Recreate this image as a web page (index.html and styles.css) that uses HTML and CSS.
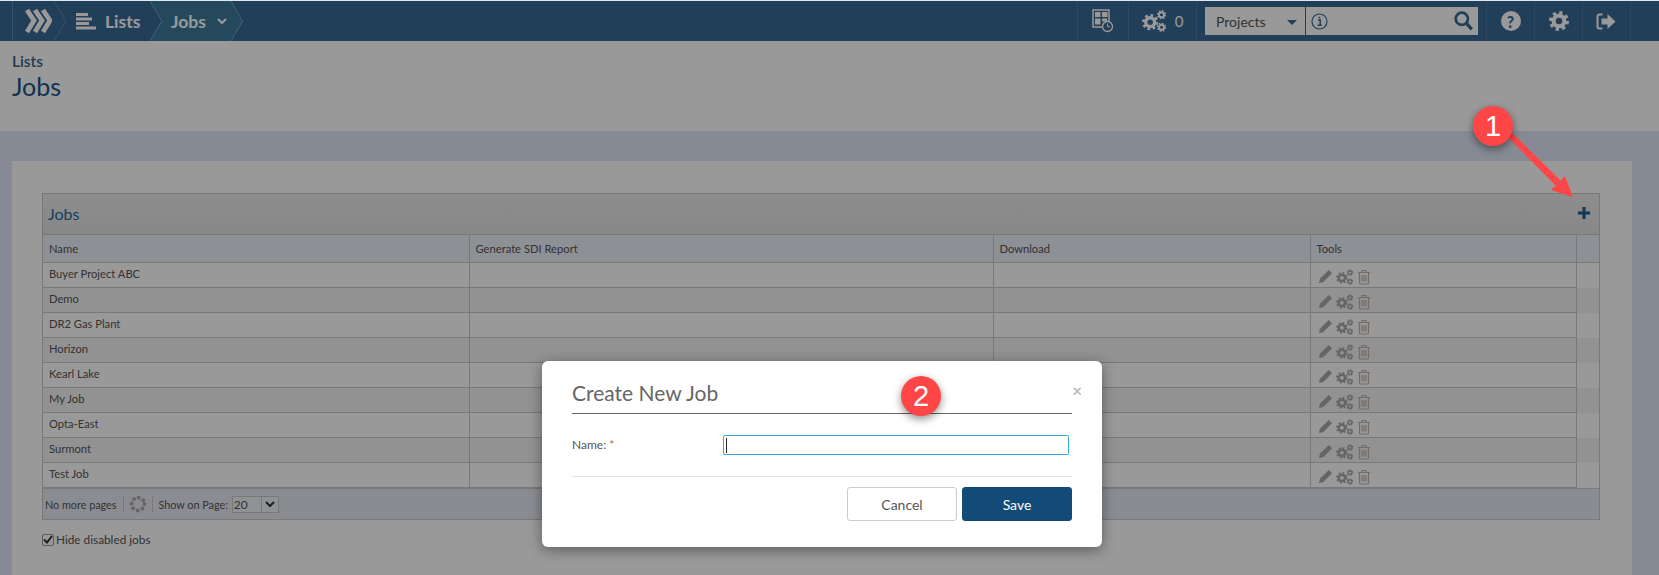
FILE: index.html
```html
<!DOCTYPE html>
<html lang="en">

<head>
    <meta charset="UTF-8">
    <meta name="viewport" content="width=device-width, initial-scale=1.0">
    <title>Jobs</title>
    <link rel="stylesheet" href="styles.css">
</head>

<body>
    <svg class="defs" width="0" height="0">
        <symbol id="gear" viewBox="0 0 24 24">
            <circle cx="12" cy="12" r="6.5" fill="none" stroke="currentColor" stroke-width="5"></circle>
            <circle cx="12" cy="12" r="10" fill="none" stroke="currentColor" stroke-width="4" stroke-dasharray="3.9 3.95"></circle>
        </symbol>
        <symbol id="cogs" viewBox="0 0 32 28">
            <use href="#gear" x="0" y="5" width="21" height="21"></use>
            <use href="#gear" x="19" y="0" width="12" height="12"></use>
            <use href="#gear" x="19" y="16" width="12" height="12"></use>
        </symbol>
        <symbol id="pencil" viewBox="0 0 16 16">
            <path d="M1 15l1-4.500L11.500 1l3.500 3.500L5.500 14z" fill="currentColor"></path>
        </symbol>
        <symbol id="trash" viewBox="0 0 14 16">
            <path d="M1 3.500h12M2.500 3.500v10.500q0 1 1 1h7q1 0 1-1V3.500M5 3.500V1.500h4v2M5 6v6.500M7 6v6.500M9 6v6.500" fill="none" stroke="currentColor" stroke-width="1.200"></path>
        </symbol>
    </svg>

    <nav class="topbar">
        <div class="crumbs">
            <a class="crumb crumb-logo">
                <svg width="27" height="24" viewBox="0 0 27 24">
                    <path d="M2 1l7 10.500L2 23M10 1l7 10.500L10 23M18 1l7 10.500L18 23" fill="none" stroke="#fff" stroke-width="4.800"></path>
                </svg>
                <svg class="crumb-edge" width="13" height="40" viewBox="0 0 13 40">
                    <path d="M0 0l12 20L0 40" fill="none" stroke="#5a86ad"></path>
                </svg>
            </a>
            <a class="crumb crumb-lists">
                <svg width="20" height="17" viewBox="0 0 20 17">
                    <path d="M0 0h12v3H0zM0 4.500h16v3H0zM0 9h13v3H0zM0 13.500h20v3H0z" fill="#fff"></path>
                </svg>
                <span>Lists</span>
            </a>
            <a class="crumb crumb-active">
                <svg class="crumb-shape" width="93" height="40" viewBox="0 0 93 40">
                    <path d="M0 0h81l12 20-12 20H0l12-20z" fill="#3d7a9b"></path>
                    <path d="M0 0l12 20L0 40M81 0l11.500 20L81 40" fill="none" stroke="#6fa3c4"></path>
                </svg>
                <span>Jobs</span>
                <svg class="caret" width="10" height="7" viewBox="0 0 10 7">
                    <path d="M1 1l4 4 4-4" fill="none" stroke="#fff" stroke-width="2.200"></path>
                </svg>
            </a>
        </div>
        <div class="tools">
            <a class="tool tool-schedule">
                <svg width="22" height="24" viewBox="0 0 22 24">
                    <path d="M1 1h16v17H1z" fill="none" stroke="#fff" stroke-width="1.500"></path>
                    <path d="M3 3h5.500v5H3zM10 3h5.500v5H10zM3 9.500h5.500v6H3zM10 9.500h5v3h-5z" fill="#fff"></path>
                    <circle cx="15.500" cy="17.500" r="5" fill="#3a6996" stroke="#fff" stroke-width="1.300"></circle>
                    <path d="M15.500 14.500v3.300h2.500" fill="none" stroke="#fff"></path>
                </svg>
            </a>
            <a class="tool tool-jobs">
                <svg class="icon-cogs" width="25" height="24"><use href="#cogs"></use></svg>
                <span>0</span>
            </a>
            <div class="search">
                <div class="search-type">
                    <span>Projects</span>
                    <i class="search-arrow"></i>
                </div>
                <div class="search-box">
                    <svg width="17" height="17" viewBox="0 0 17 17">
                        <circle cx="8.500" cy="8.500" r="7.500" fill="none" stroke="#3a6996" stroke-width="1.200"></circle>
                        <path d="M7 7h2.200v5M6.700 12.200h4M7.500 4.500h1.800" fill="none" stroke="#3a6996" stroke-width="1.500"></path>
                    </svg>
                    <svg width="19" height="20" viewBox="0 0 17 18">
                        <circle cx="7" cy="7" r="5.500" fill="none" stroke="#3a6996" stroke-width="2.400"></circle>
                        <path d="M11 11l5 5.500" fill="none" stroke="#3a6996" stroke-width="3"></path>
                    </svg>
                </div>
            </div>
            <a class="tool">
                <span class="help-icon">?</span>
            </a>
            <a class="tool">
                <svg width="20" height="20"><use href="#gear"></use></svg>
            </a>
            <a class="tool">
                <svg width="21" height="17" viewBox="0 0 20 17">
                    <path d="M6 1.500H3q-2 0-2 2v10q0 2 2 2h3" fill="none" stroke="#fff" stroke-width="2"></path>
                    <path d="M5 5.500h6V1l8 7.500-8 7.500v-4.500H5z" fill="#fff"></path>
                </svg>
            </a>
        </div>
    </nav>

    <header class="page-head">
        <div class="page-parent">Lists</div>
        <h1 class="page-title">Jobs</h1>
    </header>

    <main class="content">
        <section class="panel">
            <div class="grid">
                <div class="grid-title">
                    <span>Jobs</span>
                    <svg width="12" height="12" viewBox="0 0 12 12">
                        <path d="M0 4.500h4.500V0h3v4.500H12v3H7.500V12h-3V7.500H0z" fill="#1f5c8e"></path>
                    </svg>
                </div>
                <table class="grid-table">
                    <thead>
                        <tr>
                            <th class="col-name">Name</th>
                            <th class="col-report">Generate SDI Report</th>
                            <th class="col-download">Download</th>
                            <th class="col-tools">Tools</th>
                            <th class="col-scroll"></th>
                        </tr>
                    </thead>
                    <tbody id="job-list">
                        <!-- rows from script.js -->
                    </tbody>
                </table>
                <div class="grid-foot">
                    <span>No more pages</span>
                    <i class="foot-sep"></i>
                    <svg class="spinner" width="18" height="18" viewBox="0 0 18 18">
                        <circle cx="9" cy="9" r="6.400" fill="none" stroke="#aaa" stroke-width="4" stroke-linecap="round" stroke-dasharray="0 5.027"></circle>
                    </svg>
                    <i class="foot-sep"></i>
                    <span class="foot-show">Show on Page:</span>
                    <div class="page-size">
                        <span class="page-size-value">20</span>
                        <span class="page-size-btn">
                            <svg width="10" height="7" viewBox="0 0 10 7">
                                <path d="M1 1l4 4 4-4" fill="none" stroke="#2b3b4b" stroke-width="2.200"></path>
                            </svg>
                        </span>
                    </div>
                </div>
            </div>
            <label class="hide-disabled">
                <span class="checkbox">
                    <svg width="10" height="9" viewBox="0 0 10 9">
                        <path d="M1 4.500l3 3 5-6.500" fill="none" stroke="#333" stroke-width="2"></path>
                    </svg>
                </span>
                Hide disabled jobs
            </label>
        </section>
    </main>

    <div class="overlay"></div>

    <div class="modal">
        <div class="modal-head">
            <h2>Create New Job</h2>
            <span class="modal-close">&times;</span>
        </div>
        <div class="modal-row">
            <label class="modal-label">Name: <span class="required">*</span></label>
            <div class="modal-input"><i class="text-caret"></i></div>
        </div>
        <div class="modal-foot">
            <button class="btn-cancel">Cancel</button>
            <button class="btn-save">Save</button>
        </div>
    </div>

    <svg class="callout-arrow" width="100" height="90" viewBox="0 0 100 90">
        <path d="M22 13L18 17 75.500 75.500 80.500 70.500z" fill="#ff4646"></path>
        <path d="M93 87.300L71 80 85 66z" fill="#ff4646"></path>
    </svg>
    <div class="callout callout-1">1</div>
    <div class="callout callout-2">2</div>

    <script src="script.js"></script>
</body>

</html>
```

FILE: styles.css
```css
* {
    box-sizing: border-box;
}

html,
body {
    height: 575px;
    overflow: hidden;
}

body {
    margin: 0;
    padding-top: 1px;
    position: relative;
    background-color: #dfe6f7;
    font-family: Lato, "Open Sans", sans-serif;
    font-size: 12px;
    color: #555;
}

.defs {
    position: absolute;
}

/* top bar */
.topbar {
    display: flex;
    justify-content: space-between;
    height: 40px;
    background-color: #3a6996;
    color: #fff;
}

.crumbs {
    display: flex;
    padding-left: 12px;
}

.crumb {
    position: relative;
    display: flex;
    align-items: center;
    font-size: 17.500px;
    font-weight: 700;
}

.crumb span {
    padding-top: 1px;
}

.crumb-logo {
    width: 41px;
    padding-left: 12px;
    border-left: 1px solid #5a86ad;
}

.crumb-edge {
    position: absolute;
    left: 41px;
    top: 0;
}

.crumb-lists {
    width: 97px;
    padding-left: 23px;
    gap: 9px;
}

.crumb-active {
    width: 93px;
    padding-left: 21px;
    gap: 11px;
}

.crumb-active span,
.crumb-active .caret {
    position: relative;
}

.crumb-shape {
    position: absolute;
    left: 0;
    top: 0;
}

.tools {
    display: flex;
    align-items: center;
    height: 40px;
    padding-right: 28px;
}

.tool {
    display: flex;
    align-items: center;
    justify-content: center;
    gap: 8px;
    width: 48px;
    height: 40px;
    border-left: 1px solid #50789f;
    font-size: 15px;
    font-weight: 400;
}

.tool:last-child {
    border-right: 1px solid #50789f;
    width: 49px;
}

.tool-schedule {
    width: 51px;
}

.tool-jobs {
    width: 69px;
    margin-right: 8px;
    border-right: 1px solid #50789f;
}

.help-icon {
    display: flex;
    align-items: center;
    justify-content: center;
    width: 20px;
    height: 20px;
    border-radius: 50%;
    background-color: #fff;
    color: #3a6996;
    font-size: 16px;
    font-weight: 900;
}

.search {
    display: flex;
    gap: 1px;
    height: 28px;
    margin-right: 8px;
}

.search-type,
.search-box {
    display: flex;
    align-items: center;
    justify-content: space-between;
    background-color: #fff;
}

.search-type {
    width: 100px;
    padding: 0 8px 0 11px;
    font-size: 14px;
    color: #555;
}

.search-arrow {
    width: 0;
    height: 0;
    border-left: 5px solid transparent;
    border-right: 5px solid transparent;
    border-top: 5px solid #3a6996;
    margin-top: 3px;
}

.search-box {
    width: 172px;
    padding: 0 5px;
}

/* page head */
.page-head {
    height: 90px;
    padding: 10px 12px 0;
    background-color: #fff;
}

.page-parent {
    font-size: 15.500px;
    line-height: 20px;
    font-weight: 600;
    color: #3b6285;
}

.page-title {
    margin: 0;
    font-size: 25px;
    line-height: 30px;
    font-weight: 400;
    color: #1a5486;
}

.content {
    padding: 30px 27px 0 12px;
}

.panel {
    height: 420px;
    padding: 32px 32px 0 30px;
    background-color: #fff;
}

/* jobs grid */
.grid {
    border: 1px solid #c8c8c8;
    background-color: #fff;
}

.grid-title {
    display: flex;
    align-items: center;
    justify-content: space-between;
    height: 40px;
    padding: 0 9px 2px 5px;
    background: linear-gradient(#ececec, #e2e2e2);
    font-size: 16px;
    color: #2a6a9e;
}

.grid-table {
    width: 100%;
    table-layout: fixed;
    border-collapse: collapse;
    font-size: 11.200px;
}

.grid-table th,
.grid-table td {
    height: 25px;
    padding: 0 6px 3px;
    text-align: left;
    font-weight: 400;
    border: 1px solid #c8c8c8;
    color: #555;
}

.grid-table tr > :first-child {
    border-left: 0;
}

.grid-table tr > :last-child {
    border-right: 0;
}

.grid-table th {
    height: 28px;
    padding-bottom: 1px;
    background-color: #ecf0f8;
}

.grid-table tbody tr:nth-child(even) td {
    background-color: #f3f3f3;
}

.grid-table tbody td.col-scroll {
    background-color: #fff;
    border-top: 0;
    border-bottom: 0;
}

.col-name {
    width: 426px;
}

.col-report {
    width: 524px;
}

.col-download {
    width: 317px;
}

.col-tools {
    width: 266px;
}

.row-tools {
    display: flex;
    align-items: center;
    gap: 3px;
    padding-left: 1px;
    padding-top: 3px;
    margin-bottom: -3px;
    color: #a9a9a9;
}

.row-tools .trash {
    color: #c2b5ae;
}

.grid-foot {
    display: flex;
    align-items: center;
    gap: 7px;
    height: 31px;
    padding-left: 2px;
    background-color: #e6eaf4;
    border-top: 1px solid #c8c8c8;
    font-size: 10.800px;
}

.foot-sep {
    width: 1px;
    height: 16px;
    background-color: #c8c8c8;
}

.spinner {
    margin: 0 -2px;
}

.foot-show {
    margin-left: -2px;
}

.page-size {
    display: flex;
    height: 17px;
    margin-left: -3px;
    border: 1px solid #c8c8c8;
    background-color: #f0f3fa;
}

.page-size-value {
    width: 28px;
    padding-left: 1px;
    font-size: 12px;
    line-height: 15px;
}

.page-size-btn {
    display: flex;
    align-items: center;
    justify-content: center;
    width: 17px;
    border-left: 1px solid #c8c8c8;
}

.hide-disabled {
    display: flex;
    align-items: center;
    gap: 2px;
    margin-top: 12px;
    font-size: 11.800px;
}

.checkbox {
    display: flex;
    align-items: center;
    justify-content: center;
    width: 12px;
    height: 12px;
    border: 1px solid #999;
    border-radius: 2px;
}

/* dialog and what sits on top of the page */
.overlay {
    position: absolute;
    top: 1px;
    left: 0;
    width: 100%;
    height: 574px;
    background-color: rgba(0, 0, 0, 0.4);
}

.modal {
    position: absolute;
    left: 542px;
    top: 361px;
    width: 560px;
    height: 186px;
    padding: 0 30px;
    background-color: #fff;
    border-radius: 6px;
    box-shadow: 0 3px 14px rgba(0, 0, 0, 0.4);
}

.modal-head {
    display: flex;
    justify-content: space-between;
    height: 53px;
    border-bottom: 1px solid #666;
}

.modal-head h2 {
    margin: 0;
    padding-top: 16px;
    font-size: 21px;
    line-height: 32px;
    font-weight: 400;
    color: #666;
}

.modal-close {
    margin-right: -10px;
    padding-top: 18px;
    font-size: 17px;
    line-height: 24px;
    font-weight: 700;
    color: #bbb;
}

.modal-row {
    display: flex;
    align-items: center;
    height: 63px;
    border-bottom: 1px solid #e4e4e4;
}

.modal-label {
    width: 151px;
    padding-bottom: 2px;
    font-size: 12px;
    color: #555;
}

.required {
    color: #d9534f;
}

.modal-input {
    display: flex;
    align-items: center;
    width: 346px;
    height: 20px;
    padding-left: 2px;
    border: 1px solid #35a9dc;
    border-radius: 2px;
}

.text-caret {
    width: 1px;
    height: 15px;
    background-color: #222;
}

.modal-foot {
    display: flex;
    justify-content: flex-end;
    gap: 5px;
    padding-top: 10px;
}

.modal-foot button {
    width: 110px;
    height: 34px;
    border-radius: 3px;
    font-family: inherit;
    font-size: 14px;
}

.btn-cancel {
    background-color: #fff;
    border: 1px solid #ccc;
    color: #555;
}

.btn-save {
    background-color: #134b78;
    border: 1px solid #134b78;
    color: #fff;
}

.callout {
    position: absolute;
    width: 40px;
    height: 40px;
    line-height: 40px;
    text-align: center;
    border-radius: 50%;
    background-color: #ff4646;
    color: #fff;
    font-family: "Liberation Sans", Arial, sans-serif;
    font-size: 29px;
    box-shadow: 0 3px 8px rgba(0, 0, 0, 0.45);
}

.callout-1 {
    left: 1473px;
    top: 106px;
}

.callout-2 {
    left: 901px;
    top: 376px;
}

.callout-arrow {
    position: absolute;
    left: 1480px;
    top: 110px;
}
```

FILE: script.js
```js
var jobs = ["Buyer Project ABC", "Demo", "DR2 Gas Plant", "Horizon", "Kearl Lake", "My Job", "Opta-East", "Surmont", "Test Job"];

function showJobs() {
    var list = document.getElementById('job-list');
    jobs.forEach(function (name) {
        var row = document.createElement('tr');
        row.innerHTML = '<td>' + name + '</td><td></td><td></td>' +
            '<td><div class="row-tools">' +
            '<svg width="15" height="15"><use href="#pencil"></use></svg>' +
            '<svg width="18" height="16"><use href="#cogs"></use></svg>' +
            '<svg class="trash" width="14" height="16"><use href="#trash"></use></svg>' +
            '</div></td><td class="col-scroll"></td>';
        list.appendChild(row);
    });
}

showJobs();
```
